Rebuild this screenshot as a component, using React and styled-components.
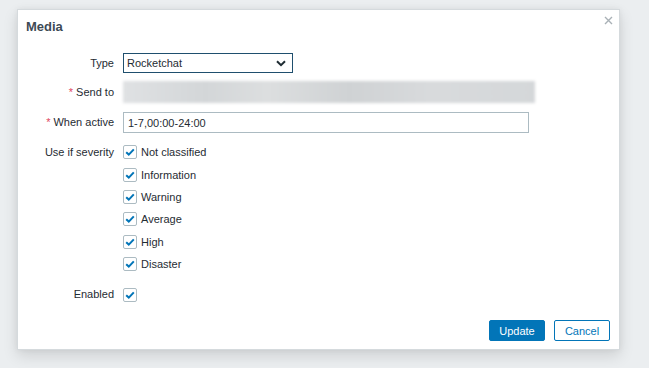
import React from "react";
import styled, { createGlobalStyle } from "styled-components";

const Global = createGlobalStyle`
  html, body { margin: 0; padding: 0; }
  body {
    background: #ebeef0;
    font-family: "Liberation Sans", Arial, sans-serif;
    font-size: 11px;
    color: #1f2c33;
    width: 649px;
    height: 368px;
    overflow: hidden;
  }
`;

const Page = styled.div`
  padding: 9px 0 0 17px;
`;

const Dialog = styled.div`
  position: relative;
  box-sizing: border-box;
  width: 603px;
  height: 341px;
  background: #ffffff;
  border: 1px solid #d5dadd;
  box-shadow: 0 6px 14px rgba(0, 0, 0, 0.12), 0 0 6px rgba(0, 0, 0, 0.06);
  display: flex;
  flex-direction: column;
`;

const Header = styled.div`
  height: 33px;
  padding: 0 8px;
  display: flex;
  align-items: center;
`;

const Title = styled.h4`
  margin: 0;
  font-size: 13px;
  font-weight: bold;
  color: #3e4a55;
`;

const Close = styled.button`
  position: absolute;
  top: 3px;
  right: 4px;
  width: 14px;
  height: 14px;
  padding: 0;
  border: 0;
  background: transparent;
  display: flex;
  align-items: center;
  justify-content: center;
`;

const Form = styled.div`
  flex: 1;
  display: grid;
  grid-template-columns: 87px 1fr;
  column-gap: 9px;
  padding: 10px 10px 0 9px;
  align-content: start;
`;

const Label = styled.div`
  text-align: right;
  height: ${(p) => p.h || 20}px;
  line-height: ${(p) => p.h || 20}px;
  margin-bottom: ${(p) => p.mb || 0}px;
  white-space: nowrap;
`;

const Star = styled.span`
  color: #e0475e;
  margin-right: 3px;
`;

const Cell = styled.div`
  margin-bottom: ${(p) => p.mb || 0}px;
`;

const SelectBox = styled.div`
  box-sizing: border-box;
  width: 170px;
  height: 20px;
  border: 1px solid #1f4f6e;
  padding: 0 6px 0 3px;
  display: flex;
  align-items: center;
  justify-content: space-between;
  background: #fff;
`;

const Blurred = styled.div`
  width: 412px;
  height: 22px;
  margin-top: 1px;
  background: linear-gradient(90deg, #dfe1e3 0%, #d3d6d8 20%, #dcdedf 35%, #cfd2d4 55%, #d8dadc 75%, #d4d7d9 100%);
  filter: blur(1.5px);
`;

const TextInput = styled.div`
  box-sizing: border-box;
  width: 406px;
  height: 21px;
  border: 1px solid #acbbc2;
  padding: 0 4px;
  display: flex;
  align-items: center;
  background: #fff;
`;

const CheckList = styled.div`
  display: flex;
  flex-direction: column;
`;

const CheckRow = styled.div`
  height: 22.4px;
  display: flex;
  align-items: center;
  gap: 4px;
`;

const Box = styled.span`
  box-sizing: border-box;
  width: 14px;
  height: 14px;
  border: 1px solid #acbbc2;
  border-radius: 2px;
  background: #fff;
  display: flex;
  align-items: center;
  justify-content: center;
`;

const Footer = styled.div`
  display: flex;
  justify-content: flex-end;
  gap: 9px;
  padding: 0 9px 8px 0;
`;

const Button = styled.button`
  box-sizing: border-box;
  width: 56px;
  height: 21px;
  border-radius: 2px;
  font-family: "Liberation Sans", Arial, sans-serif;
  font-size: 11px;
  padding: 0;
  border: 1px solid #0275b8;
  background: ${(p) => (p.primary ? "#0275b8" : "#ffffff")};
  color: ${(p) => (p.primary ? "#ffffff" : "#0275b8")};
`;

const Check = () => (
  <Box>
    <svg width="10" height="8" viewBox="0 0 10 8">
      <path d="M1.2 4.2 L3.8 6.6 L8.8 1.4" fill="none" stroke="#0275b8" strokeWidth="2" />
    </svg>
  </Box>
);

const severities = ["Not classified", "Information", "Warning", "Average", "High", "Disaster"];

export default function App() {
  return (
    <>
      <Global />
      <Page>
        <Dialog>
          <Header>
            <Title>Media</Title>
          </Header>
          <Close aria-label="Close">
            <svg width="9" height="9" viewBox="0 0 9 9">
              <path d="M1 1 L8 8 M8 1 L1 8" stroke="#a9b1b6" strokeWidth="1.4" />
            </svg>
          </Close>
          <Form>
            <Label mb={7}>Type</Label>
            <Cell mb={7}>
              <SelectBox>
                <span>Rocketchat</span>
                <svg width="10" height="7" viewBox="0 0 10 7">
                  <path d="M1 1.2 L5 5.2 L9 1.2" fill="none" stroke="#1f2c33" strokeWidth="2" />
                </svg>
              </SelectBox>
            </Cell>
            <Label h={24} mb={8}><Star>*</Star>Send to</Label>
            <Cell mb={8}>
              <Blurred />
            </Cell>
            <Label h={21} mb={8}><Star>*</Star>When active</Label>
            <Cell mb={8}>
              <TextInput>1-7,00:00-24:00</TextInput>
            </Cell>
            <Label h={22}>Use if severity</Label>
            <Cell mb={8}>
              <CheckList>
                {severities.map((s) => (
                  <CheckRow key={s}>
                    <Check />
                    <span>{s}</span>
                  </CheckRow>
                ))}
              </CheckList>
            </Cell>
            <Label h={22}>Enabled</Label>
            <Cell>
              <CheckRow>
                <Check />
              </CheckRow>
            </Cell>
          </Form>
          <Footer>
            <Button primary>Update</Button>
            <Button>Cancel</Button>
          </Footer>
        </Dialog>
      </Page>
    </>
  );
}
